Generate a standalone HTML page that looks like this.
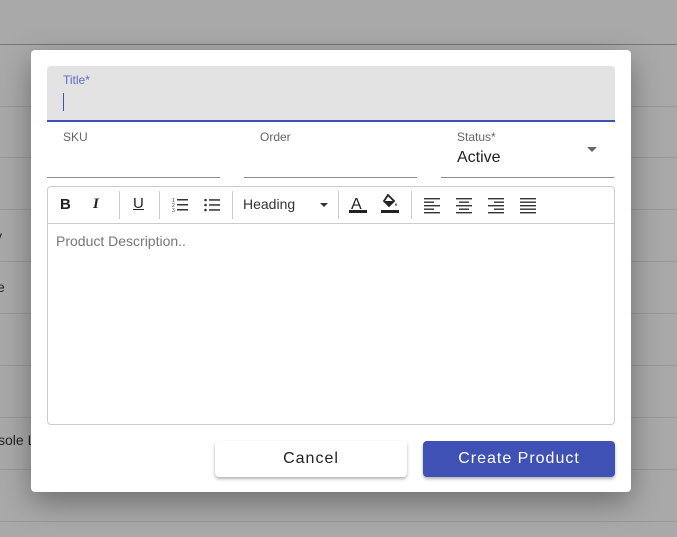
<!DOCTYPE html>
<html><head><meta charset="utf-8"><style>
*{box-sizing:border-box;margin:0;padding:0}
body{width:677px;height:537px;overflow:hidden;background:#a9a9a9;font-family:"Liberation Sans",sans-serif;position:relative}
.hl{position:absolute;left:0;width:677px;height:1px;background:#999}
.bg{position:absolute;font-size:14px;color:#222}
.dlg{position:absolute;left:31px;top:50px;width:600px;height:442px;background:#fff;border-radius:4px;box-shadow:0 10px 30px rgba(0,0,0,.35)}
.title{position:absolute;left:16px;top:16px;width:568px;height:56px;background:#e3e3e3;border-radius:4px 4px 0 0;border-bottom:2px solid #3f51b5}
.lbl{position:absolute;font-size:12px;color:#666}
.f{position:absolute;top:78px;width:173px;height:50px;border-bottom:1px solid #8a8a8a}
.ed{position:absolute;left:16px;top:136px;width:568px;height:239px;border:1px solid #ccc;border-radius:4px}
.tb{height:37px;border-bottom:1px solid #ccc;position:relative}
.sep{position:absolute;top:4px;width:1px;height:28px;background:#ccc}
.ic{position:absolute;top:9px}
.btn{position:absolute;top:391px;width:192px;height:36px;border-radius:4px;font-size:16px;letter-spacing:1px;text-align:center;line-height:36px}
</style></head><body>
<div class="hl" style="top:44px;background:#777"></div>
<div class="hl" style="top:106px"></div><div class="hl" style="top:157px"></div>
<div class="hl" style="top:209px"></div><div class="hl" style="top:261px"></div>
<div class="hl" style="top:313px"></div><div class="hl" style="top:365px"></div>
<div class="hl" style="top:417px"></div><div class="hl" style="top:469px"></div>
<div class="hl" style="top:521px"></div>
<div class="bg" style="left:-5px;top:228px">y</div>
<div class="bg" style="left:-3px;top:279px">e</div>
<div class="bg" style="left:-2px;top:432px">sole L</div>

<div class="dlg">
 <div class="title">
  <div class="lbl" style="left:16px;top:7px;color:#5c6bc0">Title*</div>
  <div style="position:absolute;left:16px;top:27px;width:1px;height:18px;background:#3f51b5"></div>
 </div>
 <div class="f" style="left:16px"><div class="lbl" style="left:16px;top:2px">SKU</div></div>
 <div class="f" style="left:213px"><div class="lbl" style="left:16px;top:2px">Order</div></div>
 <div class="f" style="left:410px"><div class="lbl" style="left:16px;top:2px">Status*</div>
  <div style="position:absolute;left:16px;top:21px;font-size:16px;color:#222">Active</div>
  <div style="position:absolute;left:146px;top:19px;width:0;height:0;border-left:5px solid transparent;border-right:5px solid transparent;border-top:5px solid #666"></div>
 </div>
 <div class="ed">
  <div class="tb">
   <div class="ic" style="left:12px;top:9px;font-weight:bold;font-size:15px;color:#222">B</div>
   <div class="ic" style="left:45px;top:9px;font-style:italic;font-weight:bold;font-size:15px;font-family:'Liberation Serif',serif;color:#222">I</div>
   <div class="sep" style="left:71px"></div>
   <div class="ic" style="left:85px;top:8px;font-size:15px;color:#222;text-decoration:underline">U</div>
   <div class="sep" style="left:111px"></div>
   <svg class="ic" style="left:123px" width="18" height="18" viewBox="0 0 18 18"><g fill="#333"><rect x="6" y="3" width="11" height="1.5"/><rect x="6" y="8" width="11" height="1.5"/><rect x="6" y="13" width="11" height="1.5"/><text x="1" y="6" font-size="5">1</text><text x="1" y="11" font-size="5">2</text><text x="1" y="16" font-size="5">3</text></g></svg>
   <svg class="ic" style="left:155px" width="18" height="18" viewBox="0 0 18 18"><g fill="#333"><circle cx="2.5" cy="4" r="1.3"/><circle cx="2.5" cy="9" r="1.3"/><circle cx="2.5" cy="14" r="1.3"/><rect x="6" y="3.2" width="11" height="1.5"/><rect x="6" y="8.2" width="11" height="1.5"/><rect x="6" y="13.2" width="11" height="1.5"/></g></svg>
   <div class="sep" style="left:184px"></div>
   <div class="ic" style="left:195px;top:9px;font-size:14px;color:#333">Heading</div>
   <div style="position:absolute;left:272px;top:16px;border-left:4px solid transparent;border-right:4px solid transparent;border-top:4px solid #333"></div>
   <div class="sep" style="left:290px"></div>
   <div class="ic" style="left:303px;top:9px;font-size:16px;color:#222">A</div>
   <div style="position:absolute;left:301px;top:23px;width:18px;height:3px;background:#222"></div>
   <svg class="ic" style="left:333px;top:7px" width="18" height="16" viewBox="0 0 18 16"><path d="M7 1 L3 7 L8 12 L13 7 Z" fill="none" stroke="#222" stroke-width="1.8"/><path d="M4 7 L12 7 L8 11Z" fill="#222"/><path d="M15 9 q-1.5 2 0 3 q1.5 -1 0 -3z" fill="#222"/></svg>
   <div style="position:absolute;left:333px;top:23px;width:18px;height:3px;background:#222"></div>
   <div class="sep" style="left:363px"></div>
   <svg class="ic" style="left:375px" width="18" height="18" viewBox="0 0 18 18"><g fill="#333"><rect x="1" y="2" width="16" height="1.4"/><rect x="1" y="5.5" width="10" height="1.4"/><rect x="1" y="9" width="16" height="1.4"/><rect x="1" y="12.5" width="10" height="1.4"/><rect x="1" y="16" width="16" height="1.4"/></g></svg>
   <svg class="ic" style="left:407px" width="18" height="18" viewBox="0 0 18 18"><g fill="#333"><rect x="1" y="2" width="16" height="1.4"/><rect x="4" y="5.5" width="10" height="1.4"/><rect x="1" y="9" width="16" height="1.4"/><rect x="4" y="12.5" width="10" height="1.4"/><rect x="1" y="16" width="16" height="1.4"/></g></svg>
   <svg class="ic" style="left:439px" width="18" height="18" viewBox="0 0 18 18"><g fill="#333"><rect x="1" y="2" width="16" height="1.4"/><rect x="7" y="5.5" width="10" height="1.4"/><rect x="1" y="9" width="16" height="1.4"/><rect x="7" y="12.5" width="10" height="1.4"/><rect x="1" y="16" width="16" height="1.4"/></g></svg>
   <svg class="ic" style="left:471px" width="18" height="18" viewBox="0 0 18 18"><g fill="#333"><rect x="1" y="2" width="16" height="1.4"/><rect x="1" y="5.5" width="16" height="1.4"/><rect x="1" y="9" width="16" height="1.4"/><rect x="1" y="12.5" width="16" height="1.4"/><rect x="1" y="16" width="16" height="1.4"/></g></svg>
  </div>
  <div style="padding:9px 8px;font-size:14px;color:#777">Product Description..</div>
 </div>
 <div class="btn" style="left:184px;background:#fff;color:#222;box-shadow:0 2px 3px rgba(0,0,0,.3)">Cancel</div>
 <div class="btn" style="left:392px;background:#3f51b5;color:#fff;box-shadow:0 2px 3px rgba(0,0,0,.3)">Create Product</div>
</div>
</body></html>
